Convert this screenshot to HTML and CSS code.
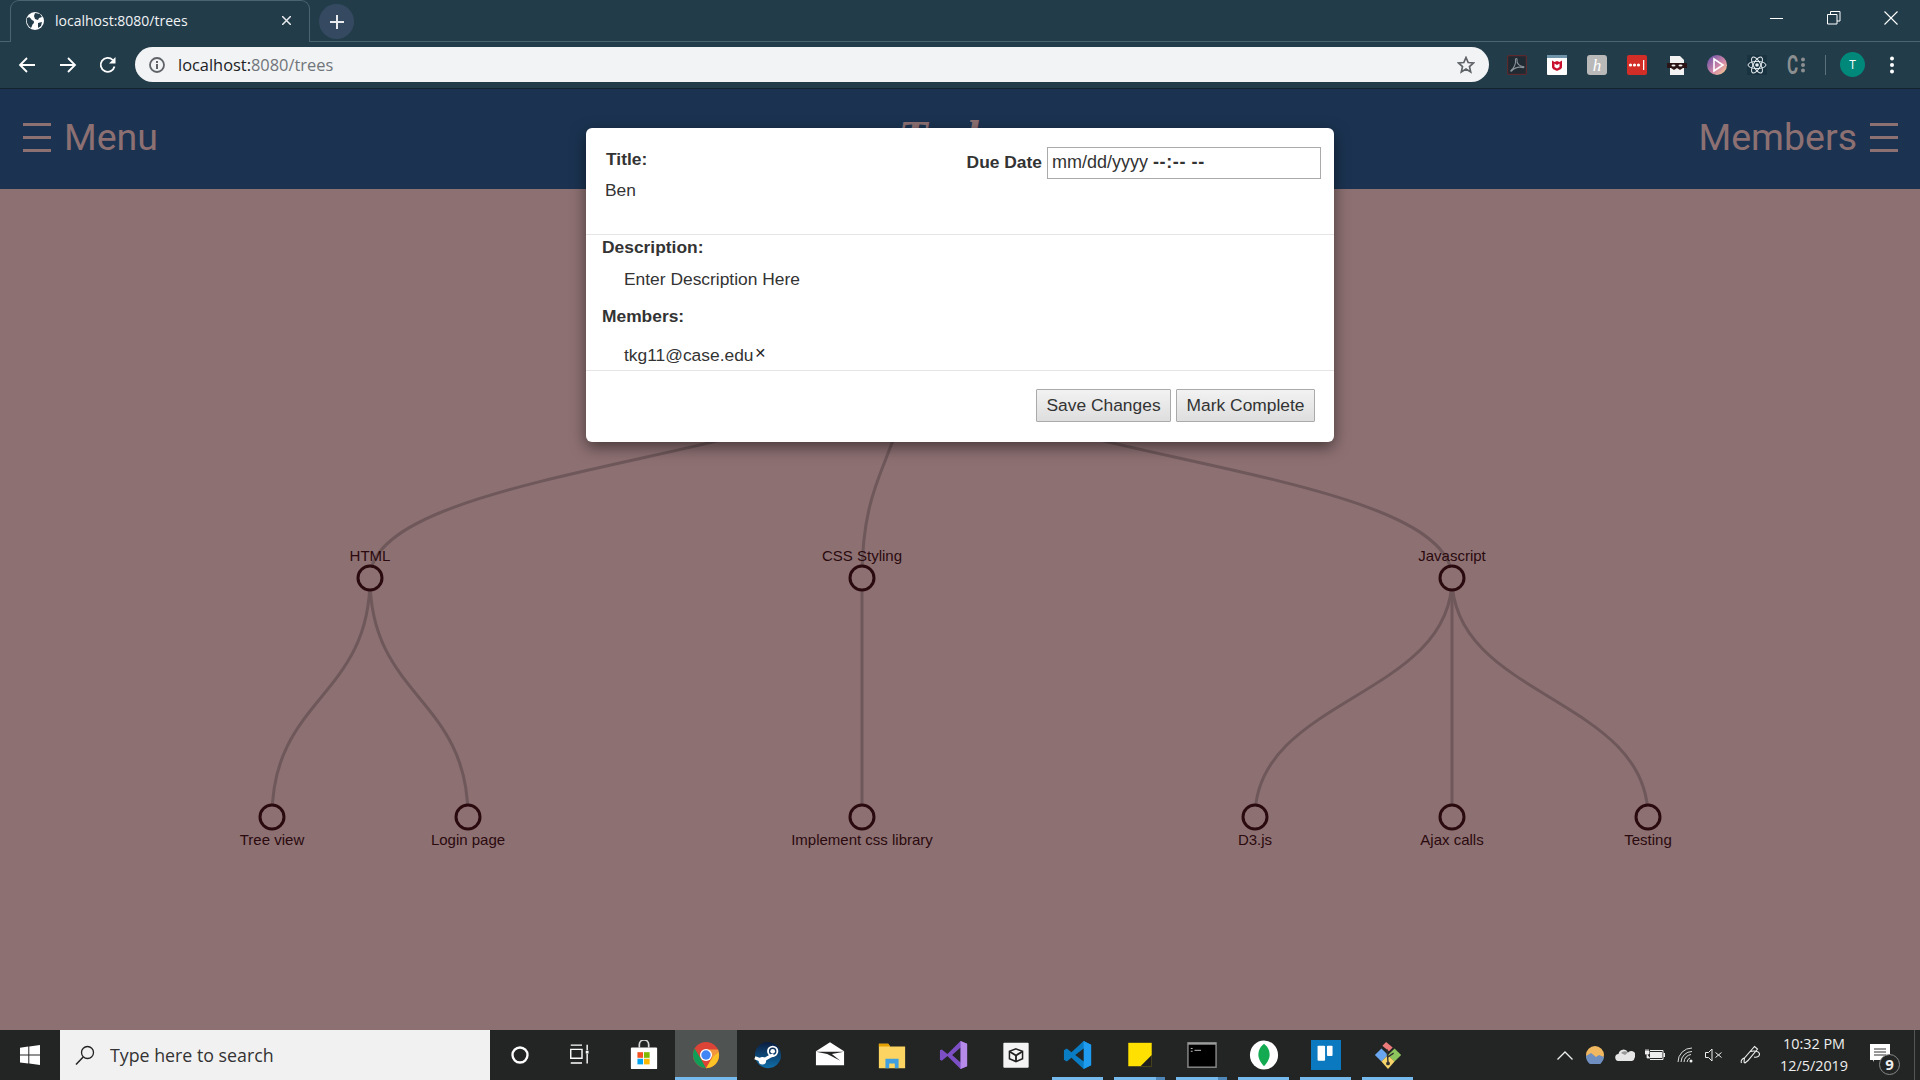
FILE: index.html
```html
<!DOCTYPE html>
<html lang="en">
<head>
    <meta charset="UTF-8">
    <title>localhost:8080/trees</title>
    <link rel="stylesheet" href="styles.css">
</head>
<body>
    <!-- browser window top -->
    <div class="tabstrip">
        <div class="tab">
            <svg class="favicon" viewBox="0 0 18 18"><circle cx="9" cy="9" r="9" fill="#fff"/><path d="M1 6c2-1 3-1 4 1s3 1 3 3-2 2-2 4l-1 2C2 14 0 10 1 6zM9 1l5 1 2 3-3 1-1 2-3-1-1-3zM12 11l4-1-1 4-3 2z" fill="#223c4a"/></svg>
            <span class="tab-title">localhost:8080/trees</span>
            <svg class="tab-close" viewBox="0 0 10 10"><path d="M0 0l10 10M10 0L0 10" stroke="#e8eaed" stroke-width="1.7"/></svg>
        </div>
        <div class="newtab"><svg viewBox="0 0 14 14"><path d="M7 0v14M0 7h14" stroke="#e8eaed" stroke-width="2"/></svg></div>
        <div class="winctl">
            <svg viewBox="0 0 14 14"><path d="M0 7.500h13" stroke="#fff"/></svg>
            <svg viewBox="0 0 14 14"><path d="M.5 3.500h9.500v9.500H.5zM3.500 3.500V.5H13v9.500h-3" fill="none" stroke="#fff"/></svg>
            <svg viewBox="0 0 14 14"><path d="M.5.5l13 13M13.500.5l-13 13" stroke="#fff" stroke-width="1.100"/></svg>
        </div>
    </div>
    <div class="toolbar">
        <div class="navbtn"><svg viewBox="0 0 18 18"><path d="M17 9H2M9 2L2 9l7 7" fill="none" stroke="#fff" stroke-width="1.800"/></svg></div>
        <div class="navbtn"><svg viewBox="0 0 18 18"><path d="M1 9h15M9 2l7 7-7 7" fill="none" stroke="#fff" stroke-width="1.800"/></svg></div>
        <div class="navbtn"><svg viewBox="0 0 18 18"><path d="M15.500 10.500A7 7 0 1 1 13.800 4" fill="none" stroke="#fff" stroke-width="1.800"/><path d="M16.500 1v6.500H10z" fill="#fff"/></svg></div>
        <div class="omnibox">
            <svg class="info" viewBox="0 0 16 16"><circle cx="8" cy="8" r="7" fill="none" stroke="#5f6368" stroke-width="1.800"/><path d="M7 7h2v5H7zM7 4h2v2H7z" fill="#5f6368"/></svg>
            <span class="url">localhost:<span class="url-dim">8080/trees</span></span>
            <svg class="star" viewBox="0 0 18 18"><path d="M9 1.500l2.200 5 5.300.5-4 3.600 1.200 5.300L9 13.100l-4.700 2.800 1.200-5.300-4-3.600 5.300-.5z" fill="none" stroke="#5f6368" stroke-width="1.700"/></svg>
        </div>
        <div class="exts">
            <svg viewBox="0 0 20 20"><rect x=".6" y=".6" width="18.800" height="18.800" rx="1.500" fill="#1f2a33" stroke="#5c2a2c" stroke-width="1.200"/><path d="M4 15.500c3-2 5-7 4.500-10.500-.3-2 2-2 1.500 0-.6 3.500 3 6.500 6 6.500 1.500 0 1 1.500-.5 1-4-1-8 .5-11 3.500-.5.500-1-.000-.500-.500z" fill="none" stroke="#8a9198" stroke-width="1.100"/></svg>
            <svg viewBox="0 0 20 20"><rect width="20" height="20" rx="1" fill="#fff"/><rect width="20" height="3" fill="#6f93a8"/><path d="M5 5.500l2.500 1.500L10 6l2.500 1L15 5.500V12c0 2-3 3-5 4-2-1-5-2-5-4z" fill="#c8102e"/><path d="M7.500 8.500L10 10l2.500-1.500V12L10 13.500 7.500 12z" fill="#fff"/></svg>
            <svg viewBox="0 0 20 20"><rect width="20" height="20" rx="3" fill="#b9b9b9"/><text x="10" y="15.500" class="ext-letter">h</text></svg>
            <svg viewBox="0 0 20 20"><rect width="20" height="20" rx="2" fill="#d32d27"/><circle cx="3.500" cy="10" r="1.600" fill="#fff"/><circle cx="7.500" cy="10" r="1.600" fill="#fff"/><circle cx="11.500" cy="10" r="1.600" fill="#fff"/><rect x="16" y="5" width="1.300" height="10" fill="#fff"/></svg>
            <svg viewBox="0 0 20 20"><path d="M3 1h10l4 4v15H3z" fill="#f2f2f2"/><path d="M0 8h20v5H16l-3 2-3-2-3 2-3-2H0z" fill="#2b1416"/><ellipse cx="6.500" cy="10.500" rx="2" ry="1" fill="#eee"/><ellipse cx="13.500" cy="10.500" rx="2" ry="1" fill="#eee"/></svg>
            <svg viewBox="0 0 20 20"><defs><linearGradient id="playg" x1="0" y1="0" x2="1" y2="1"><stop offset="0" stop-color="#5d4aa8"/><stop offset=".6" stop-color="#d88ba8"/><stop offset="1" stop-color="#f7d78c"/></linearGradient></defs><circle cx="10" cy="10" r="10" fill="url(#playg)"/><path d="M7 4l9 6-9 6z" fill="none" stroke="#fff" stroke-width="1.600"/></svg>
            <svg viewBox="0 0 20 20"><rect width="20" height="20" fill="#1a3340"/><g fill="none" stroke="#e6edf0" stroke-width="1"><ellipse cx="10" cy="10" rx="9" ry="3.600"/><ellipse cx="10" cy="10" rx="9" ry="3.600" transform="rotate(60 10 10)"/><ellipse cx="10" cy="10" rx="9" ry="3.600" transform="rotate(120 10 10)"/></g><circle cx="10" cy="10" r="1.800" fill="#e6edf0"/></svg>
            <svg viewBox="0 0 20 20"><text x="0" y="15" class="ext-c" transform="scale(.85 1.250)">C</text><circle cx="16" cy="4.500" r="2" fill="#8b8f90"/><circle cx="16" cy="10" r="2" fill="#8b8f90"/><circle cx="16" cy="15.500" r="2" fill="#8b8f90"/></svg>
        </div>
        <div class="toolsep"></div>
        <div class="avatar">T</div>
        <svg class="kebab" viewBox="0 0 4 18"><circle cx="2" cy="2.500" r="2" fill="#fff"/><circle cx="2" cy="9" r="2" fill="#fff"/><circle cx="2" cy="15.500" r="2" fill="#fff"/></svg>
    </div>

    <!-- the page itself -->
    <header class="appnav">
        <div class="nav-side">
            <span class="burger"><i></i><i></i><i></i></span>
            <span>Menu</span>
        </div>
        <h1 class="nav-title">Tasks</h1>
        <div class="nav-side nav-right">
            <span>Members</span>
            <span class="burger"><i></i><i></i><i></i></span>
        </div>
    </header>

    <main class="canvas">
        <svg class="tree" viewBox="0 189 1920 841">
            <g class="links">
                <path d="M370 578C370 458.500 910 458.500 910 339"/>
                <path d="M862 578C862 458.500 910 458.500 910 339"/>
                <path d="M1452 578C1452 458.500 910 458.500 910 339"/>
                <path d="M272 817C272 697.500 370 697.500 370 578"/>
                <path d="M468 817C468 697.500 370 697.500 370 578"/>
                <path d="M862 817V578"/>
                <path d="M1255 817C1255 697.500 1452 697.500 1452 578"/>
                <path d="M1452 817V578"/>
                <path d="M1648 817C1648 697.500 1452 697.500 1452 578"/>
            </g>
            <g class="nodes">
                <circle cx="370" cy="578" r="12"/>
                <circle cx="862" cy="578" r="12"/>
                <circle cx="1452" cy="578" r="12"/>
                <circle cx="272" cy="817" r="12"/>
                <circle cx="468" cy="817" r="12"/>
                <circle cx="862" cy="817" r="12"/>
                <circle cx="1255" cy="817" r="12"/>
                <circle cx="1452" cy="817" r="12"/>
                <circle cx="1648" cy="817" r="12"/>
            </g>
            <g class="labels">
                <text x="370" y="561">HTML</text>
                <text x="862" y="561">CSS Styling</text>
                <text x="1452" y="561">Javascript</text>
                <text x="272" y="845">Tree view</text>
                <text x="468" y="845">Login page</text>
                <text x="862" y="845">Implement css library</text>
                <text x="1255" y="845">D3.js</text>
                <text x="1452" y="845">Ajax calls</text>
                <text x="1648" y="845">Testing</text>
            </g>
        </svg>
    </main>

    <div class="modal">
        <div class="modal-head">
            <div class="title-block">
                <label>Title:</label>
                <div class="title-value">Ben</div>
            </div>
            <div class="due-block">
                <label>Due Date</label>
                <div class="date-input">mm/dd/yyyy <b>--:-- --</b></div>
            </div>
        </div>
        <div class="modal-body">
            <label>Description:</label>
            <p class="desc">Enter Description Here</p>
            <label>Members:</label>
            <p class="member">tkg11@case.edu<span class="remove">&#x2715;</span></p>
        </div>
        <div class="modal-foot">
            <button>Save Changes</button>
            <button>Mark Complete</button>
        </div>
    </div>

    <!-- windows taskbar -->
    <footer class="taskbar">
        <div class="start"><svg viewBox="0 0 20 20"><path d="M0 2.800l8.300-1.200v8H0zM9.300 1.500L20 0v9.600H9.300zM0 10.600h8.300v8L0 17.400zM9.300 10.600H20V20L9.300 18.500z" fill="#fff"/></svg></div>
        <div class="searchbox">
            <svg viewBox="0 0 20 20"><circle cx="12.500" cy="7.500" r="6" fill="none" stroke="#222" stroke-width="1.300"/><path d="M8.200 12L1 19.500" stroke="#222" stroke-width="1.500"/></svg>
            <span>Type here to search</span>
        </div>
        <div class="apps">
            <div class="app"><svg viewBox="0 0 32 32"><circle cx="16" cy="16" r="8" fill="none" stroke="#fff" stroke-width="2.500"/></svg></div>
            <div class="app"><svg viewBox="0 0 32 32"><path d="M4 5.500h12M4 24.500h12M4 10h12v9.500H4zM21.500 5v6M21.500 15v10" fill="none" stroke="#fff" stroke-width="1.500"/><rect x="20" y="11.500" width="3" height="3" fill="#fff"/></svg></div>
            <div class="app"><svg viewBox="0 0 32 32"><path d="M11 8V5a5 5 0 0 1 10 0v3" fill="none" stroke="#d8d8d8" stroke-width="1.800"/><rect x="2" y="8" width="28" height="23" rx="1" fill="#fff"/><rect x="9" y="13" width="6" height="6" fill="#f25022"/><rect x="16" y="13" width="6" height="6" fill="#7fba00"/><rect x="9" y="20" width="6" height="6" fill="#00a4ef"/><rect x="16" y="20" width="6" height="6" fill="#ffb900"/></svg></div>
            <div class="app app-active"><svg viewBox="0 0 32 32"><circle cx="16" cy="16" r="14" fill="#db4437"/><path d="M16 30a14 14 0 0 1-12-21l7 12 5 9z" fill="#0f9d58"/><path d="M16 30l7-12 6.500-5A14 14 0 0 1 16 30z" fill="#f4b400"/><path d="M29 10H16l7 8-7 12c8 0 14-6 14-14 0-2-.400-4-1-6z" fill="#ffcd40" opacity=".6"/><circle cx="16" cy="16" r="6.500" fill="#fff"/><circle cx="16" cy="16" r="5" fill="#4285f4"/></svg></div>
            <div class="app"><svg viewBox="0 0 32 32"><defs><linearGradient id="steamg" x1="0" y1="0" x2="0" y2="1"><stop offset="0" stop-color="#0c1c3e"/><stop offset="1" stop-color="#0f6ea8"/></linearGradient></defs><circle cx="16" cy="16" r="14" fill="url(#steamg)"/><path d="M2 19l8 3 9-5 3-1" fill="none" stroke="#fff" stroke-width="3.500"/><circle cx="10" cy="22" r="4" fill="#fff"/><circle cx="21" cy="12" r="5" fill="none" stroke="#fff" stroke-width="2"/><circle cx="21" cy="12" r="2.500" fill="#fff"/></svg></div>
            <div class="app"><svg viewBox="0 0 32 32"><path d="M1 12L16 2.500 31 12v15H1z" fill="#fff"/><path d="M1 12.500h30L18 15l9 7-14-7z" fill="#222523"/></svg></div>
            <div class="app"><svg viewBox="0 0 32 32"><path d="M2 4h10l2 3h16v23H2z" fill="#fcd462"/><path d="M2 4h10l2 3H2z" fill="#e3a000"/><path d="M9 30v-10h14v10h-4v-5h-6v5z" fill="#3f9fe0"/></svg></div>
            <div class="app"><svg viewBox="0 0 32 32"><path d="M23 1l7 3v24l-7 3L9 17l-6 5-2-1V11l2-1 6 5z" fill="#7d4fc4"/><path d="M23 8v16l-9-8z" fill="#222523"/><path d="M23 1l7 3v24l-7 3V24V8z" fill="#b58ae8"/></svg></div>
            <div class="app"><svg viewBox="0 0 32 32"><rect x="2.500" y="3" width="27" height="26.500" rx="1" fill="#f4f4f4"/><path d="M16 9.500l7 2.500 0 8-7 3-7-3 0-8z" fill="none" stroke="#222" stroke-width="1.600"/><path d="M16 16.500v6M16 16.500l-6.500-4M16 16.500l6.500-4" stroke="#222" stroke-width="2"/></svg></div>
            <div class="app app-open"><svg viewBox="0 0 32 32"><path d="M22 1l8 4v22l-8 4L9 19l-5 4-3-2v-10l3-2 5 4z" fill="#0a7cc4"/><path d="M22 1l8 4v22l-8 4z" fill="#1f9cf0"/><path d="M22 9v14l-9-7z" fill="#222523"/></svg></div>
            <div class="app app-open app-group"><svg viewBox="0 0 32 32"><rect x="3.500" y="3" width="25" height="25" fill="#ffe000"/><path d="M28.500 16v12h-12z" fill="#1f1f1f"/></svg></div>
            <div class="app app-open app-group"><svg viewBox="0 0 32 32"><rect x="1" y="3" width="30" height="26" fill="#000" stroke="#8c8c8c" stroke-width="1.500"/><rect x="1" y="3" width="30" height="2" fill="#9c9c9c"/><path d="M4 9h2M4 12h2M8 11h7" stroke="#ccc"/></svg></div>
            <div class="app app-open"><svg viewBox="0 0 32 32"><ellipse cx="16" cy="16" rx="15" ry="15.500" fill="#fff"/><path d="M16 4c5 4 6 8 6 12s-3 9-6 12c-3-3-6-8-6-12s1-8 6-12z" fill="#13aa52"/></svg></div>
            <div class="app app-open"><svg viewBox="0 0 32 32"><rect width="32" height="32" fill="#0b79bf"/><rect x="7" y="6" width="8" height="16" rx="1" fill="#fff"/><rect x="17" y="6" width="6" height="11" rx="1" fill="#fff"/></svg></div>
            <div class="app app-open"><svg viewBox="0 0 32 32"><path d="M2 16l7-7 7 7-7 7z" fill="#6aa6f0"/><path d="M16 16l7-7 7 7-7 7z" fill="#8cc65c"/><path d="M9 23l7-7 7 7-7 8z" fill="#f6d46a"/><path d="M10 6l4-4 7 6-4 4z" fill="#ee7b7b"/><path d="M15 10l1 14M16 18l6-4" stroke="#333" stroke-width="1.500"/><circle cx="16" cy="25" r="2" fill="#333"/></svg></div>
        </div>
        <div class="tray">
            <svg class="tray-chevron" viewBox="0 0 16 9"><path d="M.5 8.500L8 1l7.500 7.500" fill="none" stroke="#eee" stroke-width="1.300"/></svg>
            <svg class="tray-sky" viewBox="0 0 18 18"><circle cx="9" cy="9" r="9" fill="#f0b860"/><path d="M0 10l5-3 5 4 3-2 5 2a9 9 0 0 1-18-1z" fill="#6f8fc0"/></svg>
            <svg class="tray-cloud" viewBox="0 0 20 12"><path d="M4 12a3.500 3.500 0 0 1-.5-7A5 5 0 0 1 13 3.500 4 4 0 0 1 19.500 9 3 3 0 0 1 17 12z" fill="#e6e6e6"/><path d="M6 4a5 5 0 0 1 7-.5L10 6z" fill="#999"/></svg>
            <svg class="tray-battery" viewBox="0 0 20 12"><path d="M5 1.500h13v9H5" fill="none" stroke="#eee"/><rect x="5" y="3" width="12" height="6" fill="#eee"/><rect x="18.500" y="4" width="1.500" height="4" fill="#eee"/><path d="M0 2h4v3H0zM2 5v4h3M1 0v2M3 0v2" fill="#eee" stroke="#eee" stroke-width=".8"/></svg>
            <svg class="tray-wifi" viewBox="0 0 16 16"><g fill="none" stroke="#ddd"><path d="M1 15A14 14 0 0 1 15 1"/><path d="M4 15A11 11 0 0 1 15 4.500"/><path d="M7 15a8 8 0 0 1 7-7.500"/><path d="M10 15a5 5 0 0 1 3-4"/></g><circle cx="14" cy="14" r="1.500" fill="#eee"/></svg>
            <svg class="tray-vol" viewBox="0 0 18 14"><path d="M.5 4.500h3L7 1v12L3.500 9.500h-3zM10.500 4.500l6 5M16.500 4.500l-6 5" fill="none" stroke="#eee"/></svg>
            <svg class="tray-pen" viewBox="0 0 20 20"><path d="M14.500 1.500l3 2.500L8 15.500 5 18l-1-1 .5-4zM10.500 6.500c3-1 9-.500 9 2.500s-3 3.500-5.500 3M4 13c-2 1-3.500 3-2.500 5" fill="none" stroke="#eee" stroke-width="1.100"/></svg>
            <div class="clock"><div>10:32 PM</div><div>12/5/2019</div></div>
            <div class="notif">
                <svg viewBox="0 0 20 18"><path d="M0 0h20v16H4l-1 2v-2H0z" fill="#fff"/><path d="M4 5h12M4 8h12M4 11h12" stroke="#333"/></svg>
                <span class="notif-count">9</span>
            </div>
        </div>
    </footer>
</body>
</html>
```

FILE: styles.css
```css
/* basic */
html, body {
    margin: 0;
    height: 100%;
}

body {
    position: relative;
    display: flex;
    flex-direction: column;
    overflow: hidden;
    font-family: "Liberation Sans", Arial, sans-serif;
    background: #8d7072;
}

svg {
    display: block;
}

/* browser tabs */
.tabstrip {
    display: flex;
    height: 42px;
    flex: none;
    background: #223c4a;
    box-shadow: inset 0 -1px 0 #4a6570;
}

.tab {
    display: flex;
    align-items: center;
    box-sizing: border-box;
    width: 300px;
    height: 42px;
    margin-left: 10px;
    padding: 0 18px 2px 15px;
    background: #223c4a;
    border: 1px solid #4a6570;
    border-bottom: none;
    border-radius: 9px 9px 0 0;
    color: #f1f3f4;
    font-family: "Open Sans", sans-serif;
    font-size: 14px;
}

.favicon {
    width: 18px;
    height: 18px;
    margin-right: 11px;
}

.tab-close {
    width: 9px;
    height: 9px;
    margin-left: auto;
}

.newtab {
    display: flex;
    align-items: center;
    justify-content: center;
    width: 35px;
    height: 35px;
    margin: 4px 0 0 9px;
    border-radius: 50%;
    background: #354a61;
}

.newtab svg {
    width: 14px;
    height: 14px;
}

.winctl {
    display: flex;
    gap: 43px;
    margin: 11px 22px 0 auto;
}

.winctl svg {
    width: 14px;
    height: 14px;
}

/* browser toolbar */
.toolbar {
    display: flex;
    align-items: center;
    flex: none;
    box-sizing: border-box;
    height: 47px;
    padding: 0 0 1px 7px;
    background: #223c4a;
    border-bottom: 1px solid #14242e;
}

.navbtn {
    display: flex;
    justify-content: center;
    width: 40.5px;
}

.navbtn svg {
    width: 18px;
    height: 18px;
}

.omnibox {
    display: flex;
    align-items: center;
    box-sizing: border-box;
    width: 1354px;
    height: 35px;
    margin-left: 6.5px;
    padding: 0 14px 0 14px;
    border-radius: 18px;
    background: #f1f3f4;
    font-family: "Open Sans", sans-serif;
    font-size: 16.4px;
    color: #202124;
}

.info {
    width: 16px;
    height: 16px;
    margin-right: 13px;
}

.url-dim {
    color: #70757a;
}

.star {
    width: 18px;
    height: 18px;
    margin-left: auto;
}

.exts {
    display: flex;
    gap: 20px;
    margin-left: 18px;
}

.exts svg {
    width: 20px;
    height: 20px;
    overflow: visible;
}

.ext-letter {
    fill: #fff;
    font-family: "Liberation Serif", serif;
    font-style: italic;
    font-size: 17px;
    text-anchor: middle;
}

.ext-c {
    fill: #8b8f90;
    font-family: "Roboto", sans-serif;
    font-weight: bold;
    font-size: 20px;
}

.toolsep {
    width: 1px;
    height: 20px;
    margin-left: 17.5px;
    background: #5b7078;
}

.avatar {
    width: 25px;
    height: 25px;
    margin-left: 14.5px;
    border-radius: 50%;
    background: #00897b;
    color: #fff;
    font-family: "Open Sans", sans-serif;
    font-size: 12px;
    line-height: 25px;
    text-align: center;
}

.kebab {
    width: 4px;
    height: 18px;
    margin-left: 25px;
}

/* app header */
.appnav {
    display: grid;
    grid-template-columns: 1fr auto 1fr;
    flex: none;
    box-sizing: border-box;
    height: 100px;
    padding: 0 22px 0 23px;
    background: #1b3351;
    color: #8d7072;
    font-family: "Roboto", sans-serif;
    font-size: 37.5px;
}

.nav-side {
    display: flex;
    align-items: center;
    gap: 13px;
    margin-bottom: 4px;
}

.nav-right {
    justify-content: flex-end;
}

.nav-title {
    margin: 22px 14px 0 0;
    font-family: "Liberation Serif", serif;
    font-style: italic;
    font-size: 48px;
    line-height: 54px;
}

.burger {
    display: flex;
    flex-direction: column;
    gap: 10px;
    width: 28px;
}

.burger i {
    display: block;
    height: 3px;
    background: #8d7072;
}

/* the tree */
.canvas {
    flex: 1;
    min-height: 0;
}

.tree {
    width: 100%;
    height: 100%;
}

.links path {
    fill: none;
    stroke: #6f585a;
    stroke-width: 3;
}

.nodes circle {
    fill: #8d7072;
    stroke: #2a0a0e;
    stroke-width: 3;
}

.labels text {
    fill: #2a0a0e;
    font-size: 15px;
    text-anchor: middle;
}

/* task dialog */
.modal {
    position: absolute;
    top: 128px;
    left: 586px;
    width: 748px;
    height: 314px;
    display: flex;
    flex-direction: column;
    background: #fff;
    border-radius: 6px;
    box-shadow: 0 5px 15px rgba(0, 0, 0, .5);
    color: #333;
    font-size: 17.4px;
    line-height: 20px;
}

label {
    font-weight: bold;
}

.modal-head {
    display: flex;
    justify-content: space-between;
    box-sizing: border-box;
    height: 107px;
    padding: 19px 13px 0 20px;
    border-bottom: 1px solid #e5e5e5;
}

.title-block {
    margin-top: 2px;
}

.title-value {
    margin: 11px 0 0 -1px;
}

.due-block {
    display: flex;
    align-items: flex-start;
    gap: 5px;
}

.due-block label {
    margin-top: 5px;
}

.date-input {
    box-sizing: border-box;
    width: 274px;
    height: 32px;
    padding: 0 4px;
    border: 1px solid #aaa;
    font-size: 18px;
    line-height: 29px;
}

.date-input b {
    letter-spacing: .6px;
}

.modal-body {
    height: 135px;
    padding: 1.5px 0 0 16px;
    box-sizing: border-box;
}

.modal-body p {
    margin: 0 0 0 22px;
}

.desc {
    padding: 12px 0 17px;
}

.member {
    padding-top: 19px;
}

.remove {
    position: relative;
    top: -3px;
    margin-left: 1px;
    font-family: "DejaVu Sans", sans-serif;
    font-size: 14px;
    font-weight: bold;
    color: #222;
}

.modal-foot {
    display: flex;
    justify-content: flex-end;
    gap: 5px;
    padding: 18px 19px 0 0;
    border-top: 1px solid #e5e5e5;
}

button {
    height: 33px;
    padding: 0 9.5px;
    border: 1px solid #aaa;
    border-radius: 1px;
    background: linear-gradient(#f2f2f2, #dedede);
    color: #333;
    font-family: inherit;
    font-size: 17.4px;
}

/* windows taskbar */
.taskbar {
    display: flex;
    flex: none;
    height: 50px;
    background: #222523;
    color: #eee;
}

.start {
    display: flex;
    align-items: center;
    justify-content: center;
    width: 60px;
}

.start svg {
    width: 20px;
    height: 20px;
}

.searchbox {
    display: flex;
    align-items: center;
    gap: 15px;
    box-sizing: border-box;
    width: 430px;
    padding-left: 15px;
    background: #f1f1f1;
    color: #333;
    font-family: "Open Sans", sans-serif;
    font-size: 17.8px;
}

.searchbox svg {
    width: 20px;
    height: 20px;
}

.apps {
    display: flex;
    margin-left: -1px;
}

.app {
    position: relative;
    display: flex;
    align-items: center;
    justify-content: center;
    width: 62px;
    height: 50px;
}

.app svg {
    width: 30px;
    height: 30px;
}

.app-active {
    background: #4f5452;
    box-shadow: inset 0 -3px 0 #76b9ed;
}

.app-open::after {
    content: "";
    position: absolute;
    left: 5px;
    right: 6px;
    bottom: 0;
    height: 3px;
    background: #76b9ed;
}

/* the stacked window edge on grouped apps */
.app-group::before {
    content: "";
    position: absolute;
    z-index: 1;
    right: 6px;
    bottom: 0;
    width: 9px;
    height: 3px;
    background: #4f87b8;
}

.tray {
    position: relative;
    display: flex;
    align-items: center;
    margin-left: auto;
    padding-right: 6px;
}

.tray-chevron {
    width: 16px;
    height: 9px;
    margin-right: 13px;
}

.tray-sky {
    width: 18px;
    height: 18px;
    margin-right: 11px;
}

.tray-cloud {
    width: 20px;
    height: 12px;
    margin-right: 10px;
}

.tray-battery {
    width: 20px;
    height: 12px;
    margin-right: 12px;
}

.tray-wifi {
    width: 16px;
    height: 16px;
    margin-right: 12px;
}

.tray-vol {
    width: 18px;
    height: 14px;
    margin-right: 17px;
}

.tray-pen {
    width: 20px;
    height: 20px;
    margin-right: 16px;
}

.clock {
    width: 76px;
    font-family: "Open Sans", sans-serif;
    font-size: 14.4px;
    line-height: 22px;
    text-align: center;
}

.notif {
    position: relative;
    width: 20px;
    height: 18px;
    margin: -4px 24px 0 18px;
}

.notif svg {
    width: 20px;
    height: 18px;
}

.notif-count {
    position: absolute;
    left: 9px;
    top: 10px;
    width: 19px;
    height: 19px;
    border: 1px solid #888;
    border-radius: 50%;
    background: #222523;
    font-family: "Open Sans", sans-serif;
    font-size: 15px;
    font-weight: 700;
    line-height: 19px;
    text-align: center;
}

.tray::after {
    content: "";
    position: absolute;
    right: 5px;
    top: 0;
    bottom: 0;
    width: 1px;
    background: #555;
}
```
